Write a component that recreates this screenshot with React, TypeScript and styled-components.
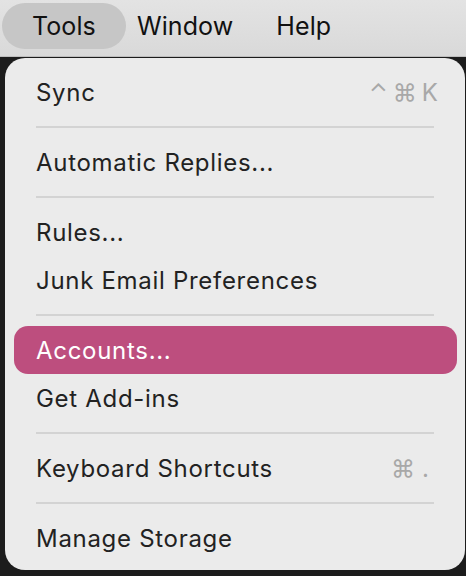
import React from "react";
import styled, { createGlobalStyle } from "styled-components";

const Global = createGlobalStyle`
  html, body { margin: 0; padding: 0; background: #1c1c1c; }
  body { font-family: Inter, "Noto Sans", "DejaVu Sans", sans-serif; -webkit-font-smoothing: antialiased; }
  * { box-sizing: border-box; }
`;

const Page = styled.div`
  width: 466px;
  height: 576px;
  display: flex;
  flex-direction: column;
  background: #1c1c1c;
  overflow: hidden;
`;

const MenuBar = styled.div`
  height: 57px;
  flex: none;
  display: flex;
  align-items: flex-start;
  padding: 3px 0 0 2px;
  background: linear-gradient(#e3e3e3, #d9d9d9);
  border-bottom: 1px solid #bdbdbd;
`;

const MenuTitle = styled.div<{ $active?: boolean; $pad: number }>`
  height: 46px;
  display: flex;
  align-items: center;
  padding: 0 ${(p) => p.$pad}px;
  border-radius: 23px;
  background: ${(p) => (p.$active ? "#c6c6c6" : "transparent")};
  font-size: 25px;
  color: #111;
  letter-spacing: 0.1px;
`;

const Panel = styled.div`
  margin: 1px 1px 0 5px;
  height: 512px;
  background: #ebebeb;
  border-radius: 20px;
  padding: 10px 8px 7px 9px;
  display: flex;
  flex-direction: column;
`;

const Item = styled.div<{ $selected?: boolean }>`
  height: 48px;
  flex: none;
  display: flex;
  align-items: center;
  justify-content: space-between;
  padding: 0 19px 0 22px;
  border-radius: 14px;
  font-size: 24px;
  letter-spacing: 0.7px;
  color: ${(p) => (p.$selected ? "#ffffff" : "#222222")};
  background: ${(p) => (p.$selected ? "#bd4e7e" : "transparent")};
`;

const Shortcut = styled.span<{ $right?: number; $spacing?: number }>`
  color: #a8a8a8;
  font-size: 24px;
  letter-spacing: ${(p) => p.$spacing ?? 5}px;
  margin-right: ${(p) => p.$right ?? 0}px;
`;

const Separator = styled.div`
  height: 22px;
  flex: none;
  display: flex;
  align-items: center;
  padding: 0 23px 0 22px;
  &::after {
    content: "";
    flex: 1;
    height: 2px;
    background: #d3d3d3;
  }
`;

export default function App() {
  return (
    <>
      <Global />
      <Page>
        <MenuBar>
          <MenuTitle $active $pad={30}>Tools</MenuTitle>
          <MenuTitle $pad={11}>Window</MenuTitle>
          <MenuTitle $pad={32}>Help</MenuTitle>
        </MenuBar>
        <Panel>
          <Item>
            Sync
            <Shortcut $right={-5}>⌃⌘K</Shortcut>
          </Item>
          <Separator />
          <Item>Automatic Replies...</Item>
          <Separator />
          <Item>Rules...</Item>
          <Item>Junk Email Preferences</Item>
          <Separator />
          <Item $selected>Accounts...</Item>
          <Item>Get Add-ins</Item>
          <Separator />
          <Item>
            Keyboard Shortcuts
            <Shortcut $right={2} $spacing={7}>⌘.</Shortcut>
          </Item>
          <Separator />
          <Item>Manage Storage</Item>
        </Panel>
      </Page>
    </>
  );
}
